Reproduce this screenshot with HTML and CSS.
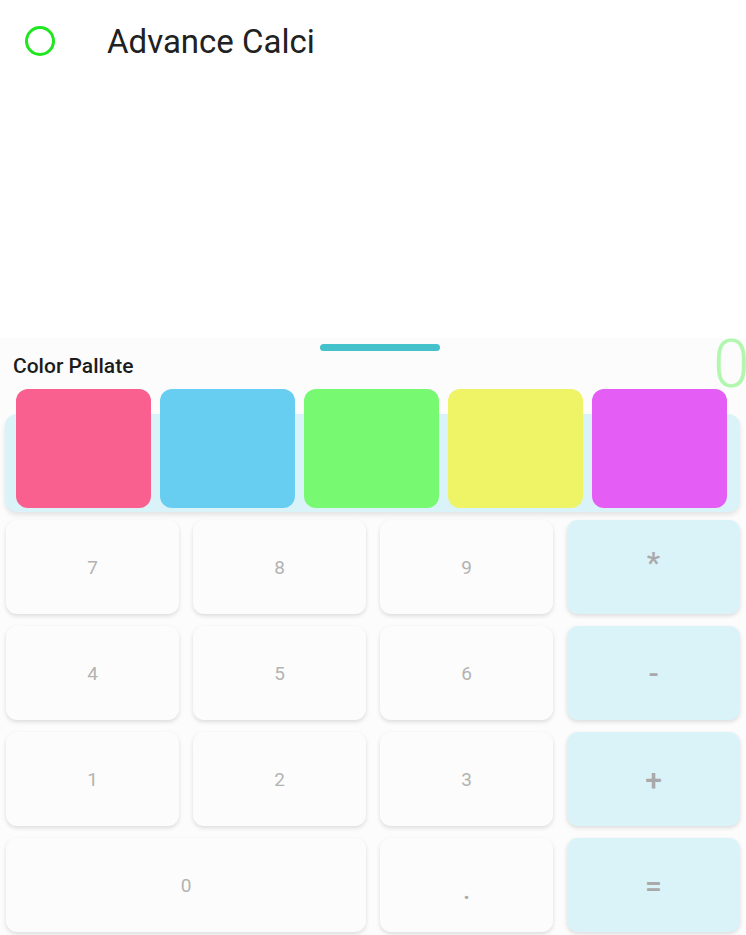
FILE: index.html
```html
<!DOCTYPE html>
<html>
<head>
<meta charset="utf-8">
<link rel="stylesheet" href="styles.css">
</head>
<body>
<div class="app">
  <header class="topbar">
    <span class="status-ring"></span>
    <h1 class="title">Advance Calci</h1>
  </header>
  <div class="spacer"></div>
  <section class="sheet">
    <div class="handle"></div>
    <div class="label-row">
      <span class="label">Color Pallate</span>
      <span class="result">0</span>
    </div>
    <div class="display">
      <div class="swatches">
        <div class="swatch pink"></div>
        <div class="swatch blue"></div>
        <div class="swatch green"></div>
        <div class="swatch yellow"></div>
        <div class="swatch purple"></div>
      </div>
    </div>
    <div class="keypad">
      <button class="key">7</button>
      <button class="key">8</button>
      <button class="key">9</button>
      <button class="key op star">*</button>
      <button class="key">4</button>
      <button class="key">5</button>
      <button class="key">6</button>
      <button class="key op">-</button>
      <button class="key">1</button>
      <button class="key">2</button>
      <button class="key">3</button>
      <button class="key op">+</button>
      <button class="key wide">0</button>
      <button class="key dot">.</button>
      <button class="key op">=</button>
    </div>
  </section>
</div>
</body>
</html>
```
FILE: styles.css
```css
html, body {
  margin: 0;
  padding: 0;
  background: #ffffff;
  font-family: Roboto, "Liberation Sans", sans-serif;
}
.app {
  width: 746px;
  height: 935px;
  display: flex;
  flex-direction: column;
  overflow: hidden;
}
.topbar {
  height: 82px;
  display: flex;
  align-items: center;
  padding-left: 25px;
  flex-shrink: 0;
}
.status-ring {
  width: 24px;
  height: 24px;
  border: 3px solid #1fe61f;
  border-radius: 50%;
  box-sizing: content-box;
}
.title {
  margin: 0 0 0 52px;
  font-size: 33px;
  font-weight: 400;
  color: #212121;
  letter-spacing: 0;
}
.spacer {
  flex: 1;
}
.sheet {
  height: 597px;
  flex-shrink: 0;
  background: #fcfcfc;
  padding-top: 6px;
  box-sizing: border-box;
  position: relative;
}
.handle {
  width: 120px;
  height: 7px;
  border-radius: 4px;
  background: #45c1cc;
  margin: 0 auto 0 320px;
}
.label-row {
  height: 38px;
  display: flex;
  align-items: flex-start;
  padding-left: 13px;
}
.label {
  margin-top: 3px;
  font-size: 21px;
  font-weight: 500;
  color: #1c1c1c;
  line-height: 24px;
}
.result {
  position: absolute;
  left: 713px;
  top: -12px;
  font-size: 66px;
  font-weight: 300;
  color: #b2f7b0;
  line-height: 77px;
}
.display {
  margin: 25px 6px 0 5px;
  height: 98px;
  background: #daf3f9;
  border-radius: 12px;
  box-shadow: 0 3px 5px rgba(0, 0, 0, 0.1);
  padding-left: 11px;
}
.swatches {
  display: flex;
  gap: 9px;
  position: relative;
  top: -25px;
}
.swatch {
  width: 135px;
  height: 119px;
  border-radius: 12px;
}
.pink { background: #f95f8f; }
.blue { background: #67cef1; }
.green { background: #77f971; }
.yellow { background: #eef466; }
.purple { background: #e45ef6; }
.keypad {
  margin-top: 8px;
  padding: 0 6px;
  display: grid;
  grid-template-columns: repeat(4, 173px);
  grid-auto-rows: 94px;
  column-gap: 14px;
  row-gap: 12px;
}
.key {
  border: none;
  margin: 0;
  padding: 0;
  background: #fcfcfc;
  border-radius: 11px;
  box-shadow: 0 2px 4px rgba(0, 0, 0, 0.13);
  font-family: Roboto, "Liberation Sans", sans-serif;
  font-size: 19px;
  font-weight: 400;
  color: #b3b3b3;
  display: flex;
  align-items: center;
  justify-content: center;
}
.key.wide {
  grid-column: span 2;
}
.key.op {
  background: #daf3f9;
  font-size: 30px;
  font-weight: 500;
  color: #a9a9a9;
}
.key.star {
  padding-bottom: 10px;
}
.key.dot {
  font-size: 26px;
  font-weight: 500;
  color: #aaaaaa;
  padding-top: 10px;
}
```
